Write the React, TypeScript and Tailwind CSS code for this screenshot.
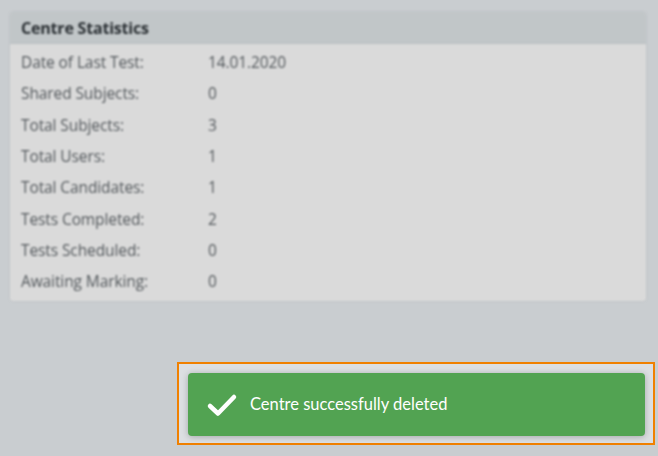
import React from "react";

const rows: [string, string][] = [
  ["Date of Last Test:", "14.01.2020"],
  ["Shared Subjects:", "0"],
  ["Total Subjects:", "3"],
  ["Total Users:", "1"],
  ["Total Candidates:", "1"],
  ["Tests Completed:", "2"],
  ["Tests Scheduled:", "0"],
  ["Awaiting Marking:", "0"],
];

export default function App() {
  return (
    <div
      className="w-[658px] h-[456px] bg-[#c9cdd0] overflow-hidden flex flex-col"
      style={{ fontFamily: "Lato, 'Open Sans', sans-serif" }}
    >
      <div
        className="pt-[12px] pl-[10px] pr-[12px] blur-[1px]"
        style={{ fontFamily: "'Open Sans', Lato, sans-serif" }}
      >
        <div className="h-[289px] bg-[#dadada] rounded-[3px] shadow-[0_0_2px_rgba(0,0,0,0.12)]">
          <div className="h-[32px] bg-[#c1c6c8] rounded-t-[3px] flex items-center pl-[11px] text-[16px] font-bold tracking-[-0.2px] text-[#2a2f33] border-b border-[#b9bfc2]">
            Centre Statistics
          </div>
          <div className="pt-[3px]">
            {rows.map(([l, v]) => (
              <div key={l} className="h-[31.3px] flex items-center text-[15.5px] tracking-[-0.1px] text-[#53585c]">
                <div className="w-[198px] pl-[11px]">{l}</div>
                <div>{v}</div>
              </div>
            ))}
          </div>
        </div>
      </div>
      <div className="flex justify-end pr-[3px] mt-[61px]">
        <div className="w-[478px] h-[83px] border-2 border-[#f08000] bg-[#dcdfe2] pt-[9px] pl-[9px] pr-[8px]">
          <div className="h-[63px] bg-[#52a352] rounded-[4px] shadow-[0_1px_6px_rgba(0,0,0,0.25)] flex items-center">
            <svg width="32" height="24" viewBox="0 0 32 24" className="ml-[18px]">
              <path
                d="M4 13 L12 20.5 L28 4"
                fill="none"
                stroke="white"
                strokeWidth="4.5"
                strokeLinecap="round"
                strokeLinejoin="round"
              />
            </svg>
            <span className="ml-[12px] text-[16.5px] text-white">Centre successfully deleted</span>
          </div>
        </div>
      </div>
    </div>
  );
}
